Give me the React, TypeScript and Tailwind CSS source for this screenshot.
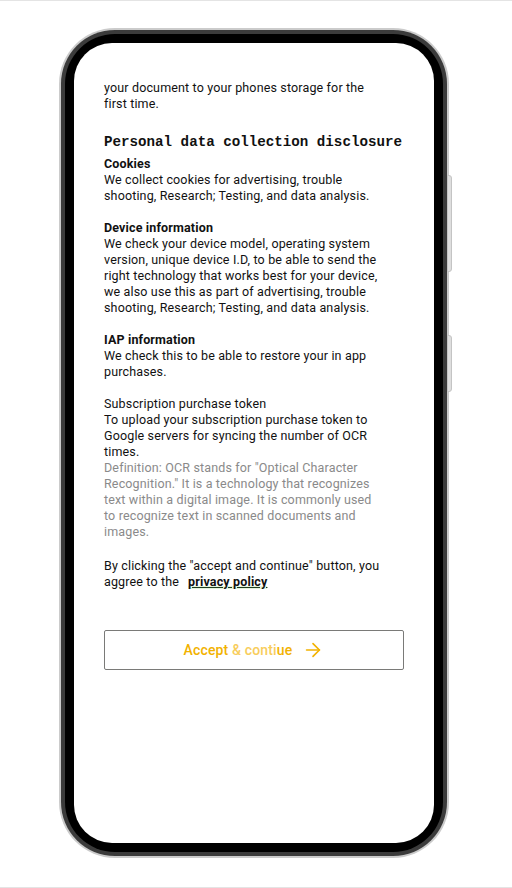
import { ArrowRight } from 'lucide-react';

const body = 'font-["Roboto","Liberation_Sans",sans-serif]';

const sections = [
  {
    title: 'Cookies',
    text: 'We collect cookies for advertising, trouble shooting, Research; Testing, and data analysis.',
  },
  {
    title: 'Device information',
    text: 'We check your device model, operating system version, unique device I.D, to be able to send the right technology that works best for your device, we also use this as part of advertising, trouble shooting, Research; Testing, and data analysis.',
  },
  {
    title: 'IAP information',
    text: 'We check this to be able to restore your in app purchases.',
  },
];

export default function App() {
  return (
    <div className="w-[512px] h-[888px] bg-white border-t border-b border-[#e4e4e4] overflow-hidden">
      {/* phone frame */}
      <div className="relative ml-[59px] mt-[27px] w-[390px] h-[830px] rounded-[56px] bg-[#cbcbcb] p-[2px]">
        {/* side buttons */}
        <div className="absolute right-[-3px] top-[147px] w-[5px] h-[97px] rounded-r-[3px] bg-[#dedede] border border-[#c4c4c4]" />
        <div className="absolute right-[-3px] top-[307px] w-[5px] h-[57px] rounded-r-[3px] bg-[#dedede] border border-[#c4c4c4]" />

        <div className="h-full rounded-[54px] bg-[#3b3b3b] p-[4px]">
          <div className="h-full rounded-[50px] bg-black p-[9px]">
            <div className={`h-full rounded-[38px] bg-white overflow-hidden pl-[30px] pr-[28px] pt-[37px] ${body} text-[12.5px] leading-[16px] tracking-[0.15px] text-[#111]`}>
              <div className="w-[281px]">
                <p>your document to your phones storage for the first time.</p>

                <h2 className='mt-[20px] w-[300px] font-["Liberation_Mono","DejaVu_Sans_Mono",monospace] font-bold text-[14.2px] leading-[20px] tracking-normal text-[#111]'>
                  Personal data collection disclosure
                </h2>

                <div className="mt-[4px] flex flex-col gap-[16px]">
                  {sections.map(s => (
                    <div key={s.title}>
                      <div className="font-bold">{s.title}</div>
                      <p>{s.text}</p>
                    </div>
                  ))}

                  <div>
                    <div>Subscription purchase token</div>
                    <p>To upload your subscription purchase token to Google servers for syncing the number of OCR times.</p>
                    <p className="text-[#8a8a8a]">
                      Definition: OCR stands for "Optical Character Recognition." It is a technology that recognizes text within a digital image. It is commonly used to recognize text in scanned documents and images.
                    </p>
                  </div>
                </div>

                <p className="mt-[18px]">
                  By clicking the "accept and continue" button, you aggree to the
                  <span className="ml-[9px] font-bold underline decoration-[#1f3b1f] underline-offset-[1px] bg-[linear-gradient(transparent_78%,#e3f4dc_78%)]">
                    privacy policy
                  </span>
                </p>
              </div>

              <button className="mt-[40px] w-[300px] h-[40px] border border-[#7a7a78] rounded-[2px] flex items-center justify-center gap-[10px] text-[14px] font-medium">
                <span>
                  <span className="text-[#f2b200]">Accept </span>
                  <span className="text-[#f8cd5c]">&amp; conti</span>
                  <span className="text-[#f2b200]">ue</span>
                </span>
                <ArrowRight className="w-[22px] h-[22px] text-[#f2b200]" strokeWidth={1.8} />
              </button>
            </div>
          </div>
        </div>
      </div>
    </div>
  );
}
